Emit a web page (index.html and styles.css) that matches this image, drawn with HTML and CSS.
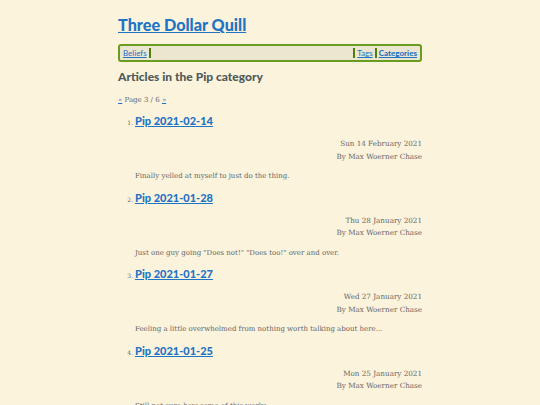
FILE: index.html
```html
<!DOCTYPE html>
<html>
<head>
<meta charset="utf-8">
<link rel="stylesheet" href="styles.css">
</head>
<body>
<div class="page">
  <header class="site-header">
    <h1 class="site-title"><a href="#">Three Dollar Quill</a></h1>
    <nav class="nav">
      <a href="#" class="nav-link">Beliefs</a>
      <span class="sep"></span>
      <span class="spacer"></span>
      <span class="sep"></span>
      <a href="#" class="nav-link">Tags</a>
      <span class="sep"></span>
      <a href="#" class="nav-link active">Categories</a>
    </nav>
  </header>
  <main>
    <h2 class="page-title">Articles in the Pip category</h2>
    <p class="pager"><a href="#">«</a> Page 3 / 6 <a href="#">»</a></p>
    <ol class="articles">
      <li class="article">
        <h3 class="article-title"><a href="#">Pip 2021-02-14</a></h3>
        <div class="meta"><div>Sun 14 February 2021</div><div>By Max Woerner Chase</div></div>
        <p class="summary">Finally yelled at myself to just do the thing.</p>
      </li>
      <li class="article">
        <h3 class="article-title"><a href="#">Pip 2021-01-28</a></h3>
        <div class="meta"><div>Thu 28 January 2021</div><div>By Max Woerner Chase</div></div>
        <p class="summary">Just one guy going "Does not!" "Does too!" over and over.</p>
      </li>
      <li class="article">
        <h3 class="article-title"><a href="#">Pip 2021-01-27</a></h3>
        <div class="meta"><div>Wed 27 January 2021</div><div>By Max Woerner Chase</div></div>
        <p class="summary">Feeling a little overwhelmed from nothing worth talking about here...</p>
      </li>
      <li class="article">
        <h3 class="article-title"><a href="#">Pip 2021-01-25</a></h3>
        <div class="meta"><div>Mon 25 January 2021</div><div>By Max Woerner Chase</div></div>
        <p class="summary">Still not sure how some of this works.</p>
      </li>
    </ol>
  </main>
</div>
</body>
</html>
```
FILE: styles.css
```css
html, body {
  margin: 0;
  padding: 0;
  background: #fbf3dc;
}
body {
  font-family: "DejaVu Serif", serif;
  color: #666;
  font-size: 7px;
}
.page {
  width: 304px;
  margin: 0 auto;
  padding-top: 14px;
}
a { color: #1f74c4; }
.site-title {
  margin: 0;
  font-family: Lato, sans-serif;
  font-weight: 900;
  font-size: 16.2px;
  line-height: 22px;
}
.nav {
  margin-top: 8px;
  display: flex;
  align-items: center;
  height: 12px;
  padding: 1px 1px;
  border: 2px solid #6a9c20;
  border-radius: 3px;
  background: #ece5d0;
  font-family: Lato, sans-serif;
  font-size: 8px;
}
.nav-link { padding: 0 2px; }
.nav-link.active { font-weight: 900; }
.sep {
  width: 2px;
  height: 10px;
  background: #4f7d12;
}
.spacer { flex: 1; }
.page-title {
  margin: 7px 0 0;
  font-family: Lato, sans-serif;
  font-size: 12px;
  font-weight: 900;
  color: #4f5a5a;
  line-height: 16px;
}
.pager {
  margin: 11px 0 0;
  font-size: 7px;
}
.articles {
  margin: 8px 0 0;
  padding-left: 17px;
  font-size: 6px;
}
.article-title {
  margin: 0;
  font-family: Lato, sans-serif;
  font-weight: 900;
  font-size: 11px;
  line-height: 18px;
}
.meta {
  margin-top: 8px;
  text-align: right;
  font-size: 7.2px;
  line-height: 12.5px;
}
.summary {
  margin: 7px 0 6.5px;
  font-size: 7px;
  line-height: 12px;
}
```
